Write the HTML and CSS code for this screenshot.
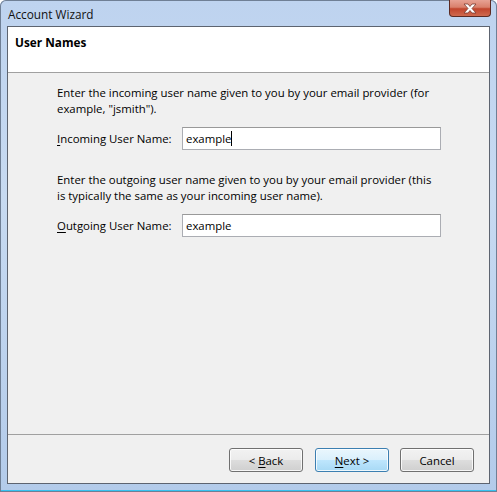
FILE: index.html
```html
<!DOCTYPE html>
<html>
<head>
<meta charset="utf-8">
<link rel="stylesheet" href="styles.css">
</head>
<body>
<div class="window">
  <div class="titlebar">
    <span class="title">Account Wizard</span>
    <div class="close"><svg width="18" height="11" viewBox="0 0 18 11"><path d="M3 1 L7 1 L9 3.5 L11 1 L15 1 L11 5.5 L15 10 L11 10 L9 7.5 L7 10 L3 10 L7 5.5 Z" fill="#fff" stroke="#7a3a30" stroke-width="0.8" stroke-linejoin="round"/></svg></div>
  </div>
  <div class="client">
    <div class="header"><span class="heading">User Names</span></div>
    <div class="content">
      <p class="desc">Enter the incoming user name given to you by your email provider (for<br>example, "jsmith").</p>
      <div class="row">
        <span class="label"><u>I</u>ncoming User Name:</span>
        <div class="field">example<span class="caret"></span></div>
      </div>
      <p class="desc second">Enter the outgoing user name given to you by your email provider (this<br>is typically the same as your incoming user name).</p>
      <div class="row">
        <span class="label"><u>O</u>utgoing User Name:</span>
        <div class="field">example</div>
      </div>
    </div>
    <div class="footer">
      <button class="btn">&lt; <u>B</u>ack</button>
      <button class="btn default"><u>N</u>ext &gt;</button>
      <button class="btn cancel">Cancel</button>
    </div>
  </div>
</div>
</body>
</html>
```
FILE: styles.css
```css
html, body {
  margin: 0;
  padding: 0;
}
body {
  width: 497px;
  height: 492px;
  overflow: hidden;
  font-family: "Open Sans", "Noto Sans", sans-serif;
  font-size: 11.4px;
  color: #000;
}
.window {
  box-sizing: border-box;
  width: 497px;
  height: 492px;
  padding: 0 7px 8px 7px;
  display: flex;
  flex-direction: column;
  background: linear-gradient(180deg, #bed3ef 0%, #c7daf1 40%, #b3cbea 100%);
  border-radius: 6px 6px 0 0;
  box-shadow: inset 0 0 0 1px #6f7f95, inset 0 -2px 0 #37c2f0;
}
.titlebar {
  height: 26px;
  display: flex;
  justify-content: space-between;
  align-items: flex-start;
}
.title {
  margin-top: 6px;
  margin-left: 1px;
  font-size: 11.8px;
  color: #111;
}
.close {
  width: 42px;
  height: 17px;
  margin-right: -1px;
  box-sizing: border-box;
  border: 1px solid #5c2a22;
  border-top: none;
  border-radius: 0 0 4px 4px;
  background: linear-gradient(180deg, #e7a294 0%, #d9806c 45%, #c1452d 55%, #cf6a4f 100%);
  display: flex;
  align-items: center;
  justify-content: center;
}
.client {
  flex: 1;
  display: flex;
  flex-direction: column;
  border: 1px solid #5d6470;
  background: #f0f0f0;
}
.header {
  height: 46px;
  background: #fff;
  border-bottom: 1px solid #a0a0a0;
  padding: 7px 0 0 7px;
  box-sizing: border-box;
}
.heading {
  font-weight: bold;
  font-size: 11.8px;
}
.content {
  flex: 1;
  padding: 12px 0 0 49px;
}
.desc {
  margin: 0;
  width: 420px;
  line-height: 16px;
}
.desc.second {
  margin-top: 22px;
}
.row {
  display: grid;
  grid-template-columns: 125px 259px;
  align-items: center;
  margin-top: 10px;
}
.field {
  box-sizing: border-box;
  height: 23px;
  background: #fff;
  border: 1px solid #abadb3;
  border-top-color: #999;
  padding: 0 0 0 3px;
  display: flex;
  align-items: center;
}
.caret {
  display: inline-block;
  width: 1px;
  height: 15px;
  background: #000;
}
.footer {
  height: 49px;
  border-top: 1px solid #a0a0a0;
  display: flex;
  justify-content: flex-end;
  align-items: flex-start;
  padding: 13px 15px 0 0;
  box-sizing: border-box;
  gap: 12px;
}
.btn {
  width: 74px;
  height: 24px;
  font-family: inherit;
  font-size: 11.4px;
  color: #000;
  border: 1px solid #707070;
  border-radius: 3px;
  padding: 0;
  background: linear-gradient(180deg, #f2f2f2 0%, #ebebeb 50%, #dddddd 51%, #cfcfcf 100%);
  box-shadow: inset 0 0 0 1px rgba(255, 255, 255, 0.8);
}
.btn.default {
  border-color: #3c7fb1;
  background: linear-gradient(180deg, #eaf6fd 0%, #d9f0fc 50%, #bee6fd 51%, #a7d9f5 100%);
}
.btn.cancel {
  margin-left: -1px;
}
u {
  text-decoration: underline;
  text-underline-offset: 2px;
}
```
